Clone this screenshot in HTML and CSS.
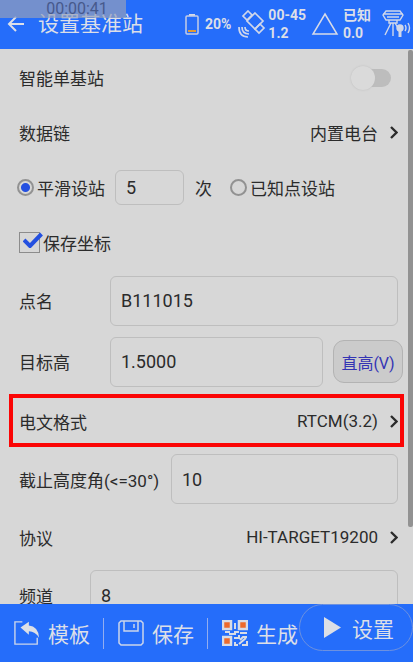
FILE: index.html
```html
<!DOCTYPE html>
<html lang="zh-CN">
<head>
    <meta charset="UTF-8">
    <meta name="viewport" content="width=device-width, initial-scale=1.0">
    <title>设置基准站</title>
    <link rel="stylesheet" href="styles.css">
</head>
<body>
    <header class="topbar">
        <button class="back" type="button" aria-label="返回">
            <svg width="18" height="16" viewBox="0 0 18 16"><path d="M17 8H2M9 1L2 8l7 7" fill="none" stroke="currentColor" stroke-width="2"/></svg>
        </button>
        <h1>设置基准站</h1>
        <div class="status battery">
            <svg width="14" height="22" viewBox="0 0 14 22"><path d="M4 1h6v2H4z" fill="#d7dbe8"/><rect x="1" y="3" width="12" height="18" rx="1" fill="none" stroke="#c4cde6" stroke-width="1.5"/><rect x="3" y="17" width="8" height="2" fill="#e09a35"/></svg>
            <span>20%</span>
        </div>
        <div class="status satellite">
            <svg width="28" height="28" viewBox="0 0 28 28" fill="none" stroke="#d0d7ea" stroke-width="1.7"><path d="M17 3l8 8-8 8-8-8z"/><path d="M10 1l4 4-5 5-4-4zM22 14l4 4-5 5-4-4z"/><path d="M7 17q0 4 4 4M4 17q0 7 7 7M1 17q0 10 9 10"/></svg>
            <span>00-45<br>1.2</span>
        </div>
        <div class="status known">
            <svg width="28" height="23" viewBox="0 0 28 23"><path d="M14 2l12 20H2z" fill="none" stroke="#d7dbe8" stroke-width="1.5"/></svg>
            <span>已知<br>0.0</span>
        </div>
        <svg class="station" width="30" height="29" viewBox="0 0 30 29" fill="none" stroke="#d0d7ea" stroke-width="1.4"><path d="M5 2h14l3 4-3 5H5L2 6zM2 5h20M6 8h12M8 11v3h8v-3M12 14v13M10 14L4 26M14 14l3 5"/><circle cx="19" cy="19" r="3" fill="#d0d7ea"/><path d="M19 21v7" stroke-width="3"/><path d="M24 16q2 3 0 6M27 14q3 5 0 10"/></svg>
        <span class="timer">00:00:41</span>
    </header>

    <main class="settings">
        <div class="row">
            <label for="single">智能单基站</label>
            <input class="switch" type="checkbox" id="single">
        </div>
        <div class="row">
            <span>数据链</span>
            <button class="picker" type="button">内置电台<svg width="8" height="13" viewBox="0 0 8 13"><path d="M1 1l5.500 5.500L1 12" fill="none" stroke="currentColor" stroke-width="2.3"/></svg></button>
        </div>
        <div class="row mode">
            <input class="radio" type="radio" name="mode" id="smooth" checked>
            <label for="smooth">平滑设站</label>
            <input class="field count" type="text" id="count" value="5" aria-label="平滑次数">
            <label class="unit" for="count">次</label>
            <input class="radio" type="radio" name="mode" id="fixed">
            <label for="fixed">已知点设站</label>
        </div>
        <div class="row save">
            <span class="tick">
                <input type="checkbox" id="save" checked>
                <svg width="20" height="16" viewBox="0 0 20 16"><path d="M1 8l6 6L18.500 2" fill="none" stroke="#2450e0" stroke-width="4"/></svg>
            </span>
            <label for="save">保存坐标</label>
        </div>
        <div class="row tall">
            <label class="name" for="point">点名</label>
            <input class="field" type="text" id="point" value="B111015">
        </div>
        <div class="row tall target">
            <label class="name" for="height">目标高</label>
            <input class="field" type="text" id="height" value="1.5000">
            <button class="method" type="button">直高(V)</button>
        </div>
        <div class="row lower marked">
            <span>电文格式</span>
            <button class="picker" type="button">RTCM(3.2)<svg width="8" height="13" viewBox="0 0 8 13"><path d="M1 1l5.500 5.500L1 12" fill="none" stroke="currentColor" stroke-width="2.3"/></svg></button>
        </div>
        <div class="row lower">
            <label class="angle" for="angle">截止高度角(&lt;=30°)</label>
            <input class="field" type="text" id="angle" value="10">
        </div>
        <div class="row lower">
            <span>协议</span>
            <button class="picker" type="button">HI-TARGET19200<svg width="8" height="13" viewBox="0 0 8 13"><path d="M1 1l5.500 5.500L1 12" fill="none" stroke="currentColor" stroke-width="2.3"/></svg></button>
        </div>
        <div class="row lower">
            <label class="channel" for="channel">频道</label>
            <input class="field" type="text" id="channel" value="8">
        </div>
        <div class="scrollbar"></div>
    </main>

    <footer class="toolbar">
        <button type="button">
            <svg width="26" height="26" viewBox="0 0 28 26"><path d="M9 1H1v24h24v-7" fill="none" stroke="#ccd5ea" stroke-width="1.500"/><path d="M7 7l9-6v4q10 1 11 13-4-7-11-7v4z" fill="#dcdfe6"/></svg>
            模板
        </button>
        <button type="button">
            <svg width="26" height="26" viewBox="0 0 26 26" fill="none" stroke="#ccd5ea" stroke-width="1.500"><path d="M3 1h20l2 2v20l-2 2H3l-2-2V3z"/><path d="M6 1v10h14V1M16 4v4"/></svg>
            保存
        </button>
        <button type="button">
            <svg width="26" height="26" viewBox="0 0 26 26"><path d="M1 1h8v8H1zM17 1h8v8h-8zM1 17h8v8H1z" fill="#ed6a2c" stroke="#d8dce6" stroke-width="2.5"/><path d="M13 3v6M3 12h5M7 14h6v-2h4M18 13h7M12 18h5v-3M13 22v3h3M18 20l3-3h4M17 24l7-6M20 25h5v-4" fill="none" stroke="#d8dce6" stroke-width="2"/></svg>
            生成
        </button>
        <button class="apply" type="button">
            <svg width="17" height="21" viewBox="0 0 17 21"><path d="M0 0l17 10.500L0 21z" fill="#dcdfe6"/></svg>
            设置
        </button>
    </footer>
</body>
</html>
```

FILE: styles.css
```css
* { box-sizing: border-box; }
body { margin: 0; height: 100vh; display: flex; flex-direction: column; overflow: hidden; font-family: Roboto, "Noto Sans CJK SC", sans-serif; font-size: 17px; color: #2b2b2b; background: #d7d7d7; }
button, input { font: inherit; color: inherit; margin: 0; }
button { padding: 0; border: none; background: none; cursor: pointer; white-space: nowrap; }
svg { display: block; flex: none; }
label, span { white-space: nowrap; }

.topbar { position: relative; flex: none; display: flex; align-items: center; height: 49px; padding: 0 2px 2px 7px; background: #256dfa; color: #dcdfe8; }
.back { width: 31px; flex: none; }
.topbar h1 { margin: 0; font-size: 21px; line-height: 24px; font-weight: 400; white-space: nowrap; }
.status { display: flex; align-items: center; font-size: 14px; line-height: 18px; font-weight: 700; }
.battery { margin-left: auto; gap: 6px; }
.satellite { margin-left: 7px; gap: 2px; }
.known { margin-left: 5px; gap: 4px; }
.station { margin-left: 10px; }
.timer { position: absolute; top: 0; left: 0; width: 126px; height: 18px; padding-left: 28px; text-align: center; font-size: 16px; line-height: 18px; color: #47598c; background: rgba(150, 160, 185, 0.7); }

.settings { position: relative; flex: 1; min-height: 0; padding-top: 1px; overflow: hidden; }
.row { position: relative; display: flex; align-items: center; height: 55px; padding: 0 15px 0 19px; }
.tall { height: 61px; }
.lower { height: 58px; }
.field { flex: 1; min-width: 0; height: 50px; padding: 0 10px; border: 1px solid #bebebe; border-radius: 6px; background: transparent; font-size: 18px; outline: none; }
.name { width: 91px; }
.angle { width: 152px; }
.channel { width: 71px; }
.picker { display: flex; align-items: center; gap: 12px; margin-left: auto; }

.switch { appearance: none; position: relative; width: 36px; height: 18px; margin: 0 7px 0 auto; border-radius: 9px; background: #bdbdbd; }
.switch::before { content: ""; position: absolute; top: -3px; left: -4px; width: 24px; height: 24px; border-radius: 50%; background: #dadada; box-shadow: 0 0 2px #bbb; }

.mode { padding-left: 17px; }
.radio { appearance: none; flex: none; width: 17px; height: 17px; margin-right: 3px; border: 2px solid #929292; border-radius: 50%; }
.radio:checked { background: radial-gradient(circle, #2450e0 4px, transparent 5px); }
.count { flex: none; width: 69px; height: 35px; margin-left: 10px; }
.unit { margin: 0 18px 0 11px; }

.tick { position: relative; display: flex; width: 21px; height: 21px; margin-right: 3px; }
.tick input { appearance: none; width: 21px; height: 21px; border: 1px solid #8c8c8c; }
.tick svg { position: absolute; top: 0; left: 4px; pointer-events: none; }

.target { padding-right: 10px; }
.method { width: 70px; height: 43px; margin-left: 10px; border: 1px solid #b3b3b3; border-radius: 11px; background: #cbcbcb; color: #3434b4; font-size: 16px; }
.marked::after { content: ""; position: absolute; inset: 2px 9px 3px; border: 4px solid #fb0505; pointer-events: none; }
.scrollbar { position: absolute; top: 1px; right: 0; width: 5px; height: 477px; border-radius: 2px; background: #929292; }

.toolbar { position: relative; flex: none; display: flex; align-items: center; height: 58px; background: #256dfa; }
.toolbar button { display: flex; align-items: center; gap: 8px; height: 31px; padding: 0 13px 0 14px; color: #dcdfe8; font-size: 21px; }
.toolbar button + button { border-left: 1px solid #92adf0; }
.toolbar .apply { position: absolute; top: 0; right: 0; width: 114px; height: 47px; padding: 0 0 0 24px; gap: 11px; border: 1px solid #6d91df; border-radius: 24px; background: #256dfa; }
```
